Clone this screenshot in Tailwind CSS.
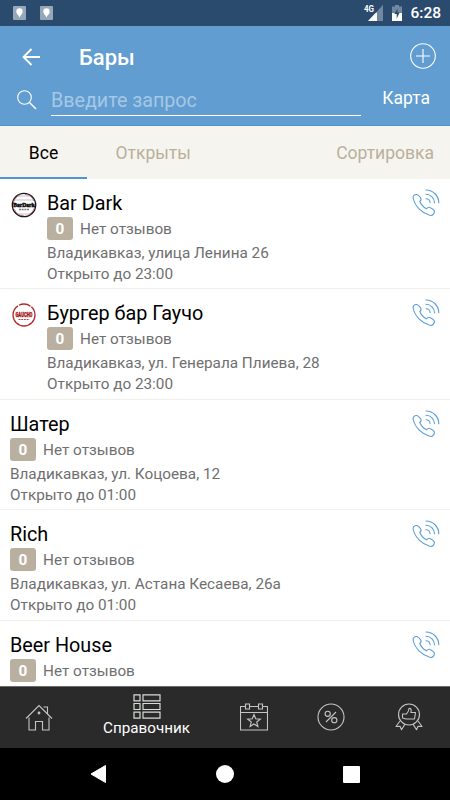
<!DOCTYPE html>
<html lang="ru">
  <head>
    <meta charset="UTF-8" />
    <meta name="viewport" content="width=device-width, initial-scale=1.0" />
    <title>Бары</title>
    <script src="https://cdn.jsdelivr.net/npm/@tailwindcss/browser@4"></script>
  </head>
  <body class="bg-black font-[Roboto,sans-serif]">
    <svg class="hidden">
      <symbol id="phone" viewBox="0 0 28 28">
        <g fill="none" stroke="#5b9fd8" stroke-width="1.1" stroke-linecap="round">
          <path d="M1.2 9.5C.5 7 2.5 5.4 4.4 5.5 6 5.3 7 6.6 8.6 8.8 9.8 10.5 9 11.5 7.8 12.5 9 15.5 12 18.5 14.5 19.8 15.8 18.2 17.2 17.8 18.8 18.9 21.5 20.3 23 21.5 22.4 23.2 21.8 25.5 20 26.8 17.8 26.3 10 24 3 17.5 1.2 9.5z" />
          <path d="M14 1a12.8 12.8 0 0 1 12.8 12.8M14 5.3a8.5 8.5 0 0 1 8.5 8.5M14 9.7a4.1 4.1 0 0 1 4.1 4.1" />
        </g>
      </symbol>
      <symbol id="pin" viewBox="0 0 13 14">
        <rect width="13" height="14" rx="1" fill="#97a7ba" />
        <path d="M6.5 11.5C5.5 9 3.3 8 3.3 5.5a3.2 3.2 0 0 1 6.4 0C9.7 8 7.5 9 6.5 11.5z" fill="#fff" />
      </symbol>
    </svg>

    <div class="w-[450px] h-[800px] flex flex-col overflow-hidden">
      <!-- status bar -->
      <div class="h-[26px] shrink-0 bg-[#2a4b6e] flex items-center pl-[13px] pr-[9px] text-white">
        <svg class="w-[13px] h-[14px] mr-[14px]"><use href="#pin" /></svg>
        <svg class="w-[13px] h-[14px]"><use href="#pin" /></svg>
        <svg class="w-[20px] h-[18px] ml-auto mr-[8px] overflow-visible" viewBox="0 0 20 18">
          <path d="M19 1v16H4z" fill="#7088a1" />
          <path d="M13 7.4V17H4z" fill="#fff" />
          <path d="M10 0v9h2l6-7V0z" fill="#2a4b6e" />
          <path d="M19 1v9l-6 5V7.4z" fill="#7088a1" />
          <text x="0" y="8" font-size="9" font-weight="700" fill="#fff" textLength="10" lengthAdjust="spacingAndGlyphs">4G</text>
        </svg>
        <svg class="w-[10px] h-[16px] mr-[8px]" viewBox="0 0 10 16">
          <path d="M0 1.5h3V0h4v1.5h3V8H0z" fill="#7088a1" />
          <path d="M0 8h10v8H0z" fill="#fff" />
          <path d="M5.5 3.5L2.3 9H4.7v4.500L7.700 7.500H5.500z" fill="#2a4b6e" />
        </svg>
        <span class="text-[15.500px] leading-none font-medium pt-[2px]">6:28</span>
      </div>

      <!-- header -->
      <div class="h-[100px] shrink-0 bg-[#619dd0] border-b border-[#4a93d3] text-white">
        <div class="h-[60px] flex items-center pl-[22px] pr-[14px]">
          <svg class="w-[18px] h-[18px] mt-px" viewBox="0 0 18 18" fill="none" stroke="#fff" stroke-width="1.9"><path d="M9.5 1L1.5 9l8 8M1.500 9H18" /></svg>
          <h1 class="ml-[39px] mt-[3px] text-[22px] leading-none font-medium">Бары</h1>
          <svg class="w-[26px] h-[26px] ml-auto" viewBox="0 0 26 26" fill="none" stroke="#fff" stroke-width="1.1"><circle cx="13" cy="13" r="12.3" /><path d="M13 6v14M6 13h14" /></svg>
        </div>
        <div class="h-[30px] flex pl-[17px] pr-[20px]">
          <svg class="w-[20px] h-[20px] mt-[4px]" viewBox="0 0 20 20" fill="none" stroke="#fff" stroke-width="1.1"><circle cx="7.5" cy="7.5" r="6.8" /><path d="M12.500 12.500L19 19" stroke-width="1.4" /></svg>
          <div class="ml-[14px] w-[310px] h-[30px] border-b border-white text-[19.700px] leading-[30px] text-[#a5c8e6]">Введите запрос</div>
          <span class="ml-auto text-[17.500px] leading-[24px]">Карта</span>
        </div>
      </div>

      <!-- tabs -->
      <div class="h-[53px] shrink-0 bg-[#f6f4ef] flex text-[17.500px] leading-[54px] text-[#b9b09c]">
        <div class="w-[87px] h-[53px] border-b-2 border-[#4a97d6] text-black text-center">Все</div>
        <div class="ml-[28.500px]">Открыты</div>
        <div class="ml-auto mr-[16px]">Сортировка</div>
      </div>

      <!-- list -->
      <div class="h-[507px] shrink-0 bg-white overflow-hidden text-[15.300px] text-[#6f6f6f]">
        <div class="h-[110.400px] flex pl-[11px] pr-[10px] pt-[10px] border-b border-[#f1efea]">
          <svg class="w-[26px] h-[26px] mt-[3px] mr-[10px] overflow-visible" viewBox="0 0 26 26">
            <circle cx="13" cy="13" r="11.7" fill="#fff" stroke="#16151a" stroke-width="1.3" />
            <circle cx="13" cy="13" r="10.7" fill="none" stroke="#b45a5e" stroke-width=".8" stroke-dasharray="12 5" />
            <path d="M4 8h18M8 4h10M8 22h10" stroke="#aaa" stroke-width=".7" />
            <text x="13" y="14.500" text-anchor="middle" font-family="Liberation Serif" font-size="5.600" font-weight="700" stroke="#111" stroke-width=".5">BarDark</text>
            <path d="M8 17.500h10" stroke="#777" stroke-width="1.5" stroke-dasharray="2 .7" />
          </svg>
          <div class="flex-1">
            <div class="text-[19.800px] leading-[30px] text-black">Bar Dark</div>
            <div class="flex -mt-[2px]"><span class="w-[26px] h-[23px] rounded-[3px] bg-[#b9b09f] text-white font-bold text-center leading-[24px] mr-[7px]">0</span><span class="leading-[24px]">Нет отзывов</span></div>
            <div class="leading-[21px] mt-[2px]">Владикавказ, улица Ленина 26</div>
            <div class="leading-[21px]">Открыто до 23:00</div>
          </div>
          <svg class="w-[28px] h-[28px]"><use href="#phone" /></svg>
        </div>
        <div class="h-[110.400px] flex pl-[11px] pr-[10px] pt-[10px] border-b border-[#f1efea]">
          <svg class="w-[26px] h-[26px] mt-[3px] mr-[10px] overflow-visible" viewBox="0 0 26 26">
            <circle cx="13" cy="13" r="11" fill="#fff" stroke="#b22a2d" stroke-width="1.3" stroke-dasharray="45 1.5 12 1" />
            <text x="13" y="14.800" text-anchor="middle" font-size="7" font-weight="900" fill="#a3151a" stroke="#a3151a" stroke-width=".3" textLength="17" lengthAdjust="spacingAndGlyphs">GAUCHO</text>
            <path d="M7.500 17.500h11" stroke="#bb4a4d" stroke-width="1" stroke-dasharray="2 .7" />
          </svg>
          <div class="flex-1">
            <div class="text-[19.800px] leading-[30px] text-black">Бургер бар Гаучо</div>
            <div class="flex -mt-[2px]"><span class="w-[26px] h-[23px] rounded-[3px] bg-[#b9b09f] text-white font-bold text-center leading-[24px] mr-[7px]">0</span><span class="leading-[24px]">Нет отзывов</span></div>
            <div class="leading-[21px] mt-[2px]">Владикавказ, ул. Генерала Плиева, 28</div>
            <div class="leading-[21px]">Открыто до 23:00</div>
          </div>
          <svg class="w-[28px] h-[28px]"><use href="#phone" /></svg>
        </div>
        <div class="h-[110.400px] flex pl-[10px] pr-[10px] pt-[10px] border-b border-[#f1efea]">
          <div class="flex-1">
            <div class="text-[19.800px] leading-[30px] text-black">Шатер</div>
            <div class="flex -mt-[2px]"><span class="w-[26px] h-[23px] rounded-[3px] bg-[#b9b09f] text-white font-bold text-center leading-[24px] mr-[7px]">0</span><span class="leading-[24px]">Нет отзывов</span></div>
            <div class="leading-[21px] mt-[2px]">Владикавказ, ул. Коцоева, 12</div>
            <div class="leading-[21px]">Открыто до 01:00</div>
          </div>
          <svg class="w-[28px] h-[28px]"><use href="#phone" /></svg>
        </div>
        <div class="h-[110.400px] flex pl-[10px] pr-[10px] pt-[10px] border-b border-[#f1efea]">
          <div class="flex-1">
            <div class="text-[19.800px] leading-[30px] text-black">Rich</div>
            <div class="flex -mt-[2px]"><span class="w-[26px] h-[23px] rounded-[3px] bg-[#b9b09f] text-white font-bold text-center leading-[24px] mr-[7px]">0</span><span class="leading-[24px]">Нет отзывов</span></div>
            <div class="leading-[21px] mt-[2px]">Владикавказ, ул. Астана Кесаева, 26а</div>
            <div class="leading-[21px]">Открыто до 01:00</div>
          </div>
          <svg class="w-[28px] h-[28px]"><use href="#phone" /></svg>
        </div>
        <div class="flex pl-[10px] pr-[10px] pt-[10px]">
          <div class="flex-1">
            <div class="text-[19.800px] leading-[30px] text-black">Beer House</div>
            <div class="flex -mt-[2px]"><span class="w-[26px] h-[23px] rounded-[3px] bg-[#b9b09f] text-white font-bold text-center leading-[24px] mr-[7px]">0</span><span class="leading-[24px]">Нет отзывов</span></div>
          </div>
          <svg class="w-[28px] h-[28px]"><use href="#phone" /></svg>
        </div>
      </div>

      <!-- bottom tabs -->
      <div class="h-[62px] shrink-0 bg-[#2a2a2a] border-t border-[#6a6a6a] flex text-[#c4c4c4]">
        <div class="w-[78px] flex justify-center pt-[17px]">
          <svg class="w-[28px] h-[28px]" viewBox="0 0 28 28" fill="none" stroke="currentColor" stroke-width="1.1">
            <path d="M1 14.500L14 1.500l13 13M18.500 3h4v7M4 13.500V26h6.500v-8.500h7V26H24V13.500" />
            <circle cx="14" cy="9" r=".9" fill="currentColor" />
          </svg>
        </div>
        <div class="w-[137px] flex flex-col items-center pt-[7px] text-white">
          <svg class="w-[28px] h-[25px]" viewBox="0 0 28 25" fill="none" stroke="#d8dbd8" stroke-width="1.2">
            <path d="M1 .8h6v6H1zM10 .8h17v6H10zM1 9.500h6v6H1zM10 9.500h17v6H10zM1 18.200h6v6H1zM10 18.200h17v6H10z" />
          </svg>
          <span class="text-[15.200px] leading-[18px]">Справочник</span>
        </div>
        <div class="w-[77px] flex justify-center pt-[16px]">
          <svg class="w-[28px] h-[28px]" viewBox="0 0 28 28" fill="none" stroke="currentColor" stroke-width="1.1">
            <path d="M5.500 3.500h-5v23.500h27V3.500h-5M9.500 3.500h9M.5 9.500h27M5.500 1h4v5h-4zM18.500 1h4v5h-4z" />
            <path d="M14 11.500l1.700 4.300 4.600.3-3.600 2.900 1.200 4.500-3.900-2.500-3.900 2.500 1.200-4.500-3.600-2.900 4.600-.3z" />
          </svg>
        </div>
        <div class="w-[78px] flex justify-center pt-[16px]">
          <svg class="w-[28px] h-[28px]" viewBox="0 0 28 28" fill="none" stroke="currentColor" stroke-width="1.1">
            <circle cx="14" cy="14" r="13" />
            <circle cx="10.700" cy="10.800" r="2.600" />
            <circle cx="17.300" cy="17.200" r="2.600" />
            <path d="M19 9L9 19" />
          </svg>
        </div>
        <div class="w-[78px] flex justify-center pt-[16px]">
          <svg class="w-[28px] h-[28px]" viewBox="0 0 28 28" fill="none" stroke="currentColor" stroke-width="1.1" stroke-linejoin="round">
            <circle cx="14" cy="11.500" r="10.500" />
            <path d="M7.500 11h3.800c1.800-1.500 2.300-3 2.700-5.500 2-.5 2.600 1 1.900 4h4.600l-1 6.500H11l-3.500-1z" />
            <path d="M5 18L1 23.500l4-.3 1.500 3.600 3.500-5.700M23 18l4 5.500-4-.3-1.500 3.600-3.500-5.700" />
          </svg>
        </div>
      </div>

      <!-- system navigation -->
      <div class="h-[52px] bg-black flex items-center pl-[90px]">
        <svg class="w-[17px] h-[18px]" viewBox="0 0 17 18"><path d="M15.500.5v17L1 9z" fill="#fff" stroke="#fff" stroke-linejoin="round" /></svg>
        <div class="w-[18px] h-[18px] rounded-full bg-white ml-[109px]"></div>
        <div class="w-[17px] h-[17px] rounded-[1px] bg-white ml-[109px]"></div>
      </div>
    </div>
  </body>
</html>
